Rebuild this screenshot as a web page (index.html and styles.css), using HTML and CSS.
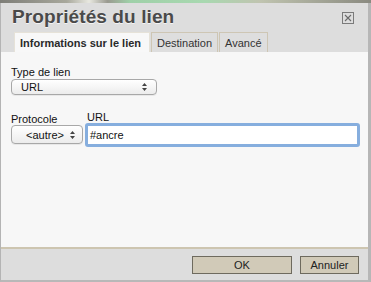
FILE: index.html
```html
<!DOCTYPE html>
<html>
<head>
<meta charset="utf-8">
<link rel="stylesheet" href="styles.css">
</head>
<body>
<div class="strip"></div>
<div class="dialog">
  <div class="titlebar">
    <h1 class="title">Propriétés du lien</h1>
    <span class="close"><svg width="12" height="12" viewBox="0 0 12 12"><rect x="0.5" y="0.5" width="11" height="11" fill="none" stroke="#7a7a7a"/><path d="M3 3L9 9M9 3L3 9" stroke="#6a6a6a" stroke-width="1.1"/></svg></span>
  </div>
  <div class="tabs">
    <div class="tab active">Informations sur le lien</div>
    <div class="tab">Destination</div>
    <div class="tab">Avancé</div>
  </div>
  <div class="content">
    <div class="field type">
      <label class="lbl">Type de lien</label>
      <div class="select wide"><span>URL</span><svg class="arr" width="5" height="8" viewBox="0 0 5 8"><path d="M2.5 0L5 3H0z M2.5 8L0 5H5z" fill="#444"/></svg></div>
    </div>
    <div class="row">
      <div class="field">
        <label class="lbl proto">Protocole</label>
        <div class="select small"><span>&lt;autre&gt;</span><svg class="arr" width="5" height="8" viewBox="0 0 5 8"><path d="M2.5 0L5 3H0z M2.5 8L0 5H5z" fill="#444"/></svg></div>
      </div>
      <div class="field grow">
        <label class="lbl url">URL</label>
        <div class="input">#ancre</div>
      </div>
    </div>
  </div>
  <div class="footer">
    <div class="btn ok">OK</div>
    <div class="btn cancel">Annuler</div>
  </div>
</div>
</body>
</html>
```
FILE: styles.css
```css
html, body { margin: 0; padding: 0; }
body { width: 371px; height: 282px; overflow: hidden; font-family: "Liberation Sans", Arial, sans-serif; background: #dcdcdc; }
.strip { height: 3px; background: linear-gradient(90deg, #7e7e78 0%, #a8a89c 18%, #e8e8e0 24%, #9a9a90 29%, #9fd0a8 35%, #a8d8b0 55%, #c0c4b0 70%, #8a8a80 100%); }
.dialog { height: 279px; box-sizing: border-box; background: #dddddd; border-left: 1px solid #b4b4b4; border-right: 3px solid #b6b6b6; border-bottom: 2px solid #b8b8b8; display: flex; flex-direction: column; }
.titlebar { height: 29px; display: flex; justify-content: space-between; align-items: flex-start; padding: 0 14px 0 11px; }
.title { margin: 3px 0 0; font-size: 19px; font-weight: bold; color: #4a4a4a; text-shadow: 0 1px 0 #f4f4f4; letter-spacing: 0.1px; }
.close { margin-top: 9px; display: block; line-height: 0; }
.tabs { height: 20px; display: flex; padding-left: 13px; gap: 1px; }
.tab { box-sizing: border-box; height: 20px; padding: 0 5px; font-size: 11px; line-height: 20px; color: #333; background: #dedede; border: 1px solid #cec6b4; border-bottom: none; }
.tab.active { background: #f8f8f8; font-weight: bold; color: #2a2a2a; width: 136px; padding: 0 0 0 5px; border-color: #e6e2d8; }
.content { flex: 1; background: #f7f7f7; border-bottom: 2px solid #cdc5b0; padding: 13px 10px 0 10px; }
.lbl { display: block; font-size: 11px; color: #111; line-height: 14px; }
.select { box-sizing: border-box; height: 16px; border: 1px solid #a8a8a8; border-radius: 4px; background: linear-gradient(#ffffff, #ececec); display: flex; align-items: center; justify-content: space-between; padding: 0 9px 0 9px; font-size: 11px; color: #111; box-shadow: 0 1px 0 rgba(0,0,0,0.06); }
.select.wide { width: 146px; }
.select.small { width: 72px; height: 19px; margin-top: -1px; padding: 0 7px 0 14px; }
.arr { display: block; }
.row { display: flex; gap: 2px; margin-top: 15px; }
.field.grow { flex: 1; }
.lbl.proto { margin-top: 2px; }
.lbl.url { padding-left: 2px; }
.input { box-sizing: border-box; height: 24px; margin-top: -1px; background: #fff; border: 3px solid #86aede; border-radius: 3px; font-size: 11px; line-height: 18px; padding-left: 2px; color: #111; margin-right: -2px; }
.footer { height: 31px; display: flex; justify-content: flex-end; align-items: flex-start; padding: 7px 9px 0 0; box-sizing: border-box; gap: 8px; }
.btn { box-sizing: border-box; height: 18px; background: #d1cab8; border: 1px solid #6e6a5e; font-size: 11px; line-height: 16px; text-align: center; color: #222; }
.btn.ok { width: 100px; }
.btn.cancel { width: 59px; }
```
